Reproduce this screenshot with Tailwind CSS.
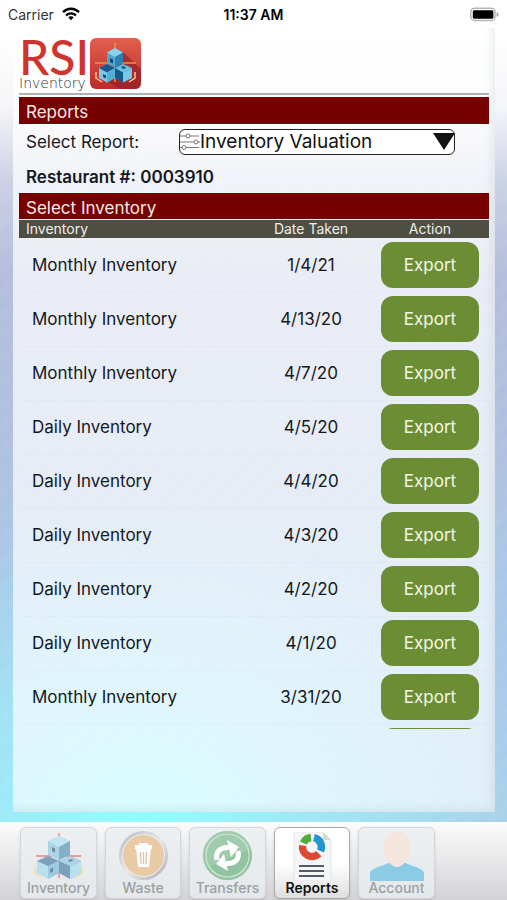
<!DOCTYPE html>
<html lang="en">

<head>
  <meta charset="UTF-8" />
  <meta name="viewport" content="width=device-width, initial-scale=1" />
  <title>RSI Inventory - Reports</title>
  <script src="https://cdn.jsdelivr.net/npm/@tailwindcss/browser@4"></script>
</head>

<body class="flex min-h-screen flex-col bg-[repeating-linear-gradient(135deg,#ffffff0c_0px,#ffffff00_8px,#ffffff0c_16px),radial-gradient(ellipse_75%_36%_at_28%_93%,#8dffff_0%,#9af4ff99_45%,#a8d4f000_100%),linear-gradient(180deg,#ffffff_0%,#ffffff_4%,#f4f5f8_12%,#cbd1e5_20%,#b4bddb_30%,#afc0df_48%,#a9c8e8_68%,#a8d0ea_92%)] font-['Inter',sans-serif] text-[#14181f]">

  <!-- Status bar -->
  <header class="grid h-7 grid-cols-3 items-center bg-white px-2 text-[14px] text-black">
    <div class="flex items-center gap-2 text-[#333]">
      <span>Carrier</span>
      <svg width="18" height="14" viewBox="0 0 18 14" fill="none" stroke="#000" stroke-width="2.4">
        <path d="M1 5.2C5.5 .6 12.500 .6 17 5.200" />
        <path d="M4 8.500C6.800 5.700 11.200 5.700 14 8.500" />
        <path d="M6.300 10.300C7.800 8.900 10.200 8.900 11.700 10.300L9 13.200Z" fill="#000" stroke="none" />
      </svg>
    </div>
    <span class="text-center font-semibold">11:37 AM</span>
    <svg class="justify-self-end" width="29" height="15" viewBox="0 0 31 15">
      <rect x=".8" y=".8" width="26" height="13" rx="4" fill="#fff" stroke="#b5b5b5" stroke-width="1.600" />
      <rect x="3" y="3" width="22" height="9" rx="1.500" fill="#000" />
      <path d="M28.500 5c1.500.5 2 1.500 2 2.500s-.5 2-2 2.500z" fill="#999" />
    </svg>
  </header>

  <!-- Page card -->
  <main class="mb-[10px] ml-[13px] mr-3 flex grow flex-col bg-linear-to-b from-white/75 to-white/65 px-[6px] pt-[10px] shadow-[inset_-8px_-8px_8px_-4px_rgba(160,180,190,0.22)]">
    <div class="flex h-[57px] items-start gap-1 border-b-2 border-[#adb0b5]">
      <div class="flex w-[67px] flex-col">
        <span class="h-[37px] font-['Lato',sans-serif] text-[48px] font-medium leading-[38px] text-[#d0342c]">RSI</span>
        <span class="font-['DejaVu_Sans',sans-serif] text-[14px] font-extralight leading-4 text-[#333]">Inventory</span>
      </div>
      <svg width="51" height="51" viewBox="0 0 51 51">
        <defs>
          <linearGradient id="logoRed" x1="0" y1="0" x2="0" y2="1">
            <stop offset="0" stop-color="#e2604e" />
            <stop offset="1" stop-color="#bd2a2a" />
          </linearGradient>
        </defs>
        <rect width="51" height="51" rx="6" fill="url(#logoRed)" />
        <path d="M32 13 51 31V45q0 6-6 6H30L18 44Z" fill="#8f2026" opacity=".65" />
        <path d="M25 5V44M5 25H46" stroke="#e9953f" stroke-width="1.500" />
        <path d="M6 34V40L12 44M45 34V40L39 44" fill="none" stroke="#f3c398" stroke-width="1.500" />
        <g>
          <path d="M25 10 33 14.500V25L25 29.500 17 25V14.500Z" fill="#4fa9cf" />
          <path d="M25 10 33 14.500 25 19 17 14.500Z" fill="#8cd3ea" />
          <path d="M25 19 33 14.500V25L25 29.500Z" fill="#2c7fae" />
          <path d="M17 26 25 30V40L17 44.500 9 40V30Z" fill="#79c8e4" />
          <path d="M17 26 25 30 17 34.500 9 30Z" fill="#15598c" />
          <path d="M17 34.500 25 30V40L17 44.500Z" fill="#53aed4" />
          <path d="M33 26 42 30V40L33 44.500 25 40V30Z" fill="#15598c" />
          <path d="M33 26 42 30 33 34.500 25 30Z" fill="#6bc0e0" />
          <path d="M33 34.500 42 30V40L33 44.500Z" fill="#79c8e4" />
          <path d="M20 20l3 1.500v4l-3-1.500zM13 36l3 1.500v3l-3-1.500zM31 29l3-1 2 2-3 1z" fill="#124a78" />
        </g>
      </svg>
    </div>

    <h1 class="mt-[2px] h-[27px] bg-[#770000] px-[7px] text-[17px] leading-[30px] text-[#f6e9e9]">Reports</h1>

    <div class="mt-[5px] flex h-[26px] items-center pl-[7px]">
      <label for="report" class="w-[153px] pt-[2px] text-[17px]">Select Report:</label>
      <div class="relative">
        <select id="report" class="h-[26px] w-[276px] appearance-none rounded-md border border-[#222] bg-white pl-5 text-[19px] leading-6 text-[#111]">
          <option>Inventory Valuation</option>
        </select>
        <svg class="pointer-events-none absolute left-px top-1" width="20" height="18" viewBox="0 0 20 18" fill="#fff" stroke="#777" stroke-width="1">
          <path d="M0 3H19M0 9H20M0 14.500H19" />
          <circle cx="8" cy="3" r="2" />
          <circle cx="16" cy="9" r="2" />
          <circle cx="4" cy="14.500" r="2" />
        </svg>
        <svg class="pointer-events-none absolute right-0 top-1" width="22" height="17" viewBox="0 0 22 17">
          <path d="M0 0H22L11 17Z" fill="#111" />
        </svg>
      </div>
    </div>

    <p class="mt-2 pl-[7px] text-[17px] font-semibold leading-7">Restaurant #: 0003910</p>

    <h2 class="mt-[2px] h-[26px] bg-[#770000] px-[7px] text-[17px] leading-[30px] text-[#f6e9e9]">Select Inventory</h2>

    <div class="mt-px max-h-[509px] overflow-hidden">
      <table class="w-full table-fixed">
        <thead>
          <tr class="h-[18px] bg-[#4f4e42] text-[14px] leading-[18px] text-[#eeeeea]">
            <th class="p-0 pl-[7px] text-left font-normal">Inventory</th>
            <th class="w-[120px] p-0 font-normal">Date Taken</th>
            <th class="w-[118px] p-0 font-normal">Action</th>
          </tr>
        </thead>
        <tbody id="inventoryRows" class="text-[17px]"></tbody>
      </table>
    </div>
  </main>

  <!-- Tab bar -->
  <nav class="flex h-[78px] gap-2 border-t border-white bg-linear-to-b from-[#fbfbfb] to-[#d3d2d5] pl-5 pt-1 text-[14px] font-medium text-[#9a9fa3]">
    <button class="flex h-[72px] w-[77px] flex-col items-center rounded-md border border-[#d3d7db] bg-[#e9edf0]/80 pt-1 shadow-sm">
      <svg width="54" height="49" viewBox="0 0 54 49">
        <path d="M27 1V46M4 24H49" stroke="#e89a9a" stroke-width="1.800" />
        <path d="M3 34V41L9 46M50 34V41L44 46" fill="none" stroke="#eee0a8" stroke-width="1.600" />
        <path d="M27 4 38 9V23L27 28 16 23V9Z" fill="#a9d5e6" />
        <path d="M27 4 38 9 27 15 16 9Z" fill="#c3e5ef" />
        <path d="M27 15 38 9V23L27 28Z" fill="#86afc6" />
        <path d="M16 24 27 29V41L16 47 5 41V29Z" fill="#b9e0ec" />
        <path d="M16 24 27 29 16 34 5 29Z" fill="#7d9fb9" />
        <path d="M16 34 27 29V41L16 47Z" fill="#9ccbdf" />
        <path d="M38 24 49 29V41L38 47 27 41V29Z" fill="#7d9fb9" />
        <path d="M38 24 49 29 38 34 27 29Z" fill="#a9d5e6" />
        <path d="M38 34 49 29V41L38 47Z" fill="#b9e0ec" />
        <path d="M20 15l3 1.500v4l-3-1.500zM18 37l3-1.500v4l-3 1.500zM36 28l4-1 1 2-4 1z" fill="#6d8da6" />
      </svg>
      <span class="leading-[13px]">Inventory</span>
    </button>
    <button class="flex h-[72px] w-[76px] flex-col items-center rounded-md border border-[#d3d7db] bg-[#e9edf0]/80 pt-[2px] shadow-sm">
      <svg width="51" height="51" viewBox="0 0 51 51">
        <defs>
          <linearGradient id="ring" x1="0" y1="0" x2="1" y2="1">
            <stop offset="0" stop-color="#b5b8bc" />
            <stop offset=".5" stop-color="#e6e8ea" />
            <stop offset="1" stop-color="#a9acb3" />
          </linearGradient>
        </defs>
        <circle cx="25.500" cy="25.500" r="24.500" fill="url(#ring)" />
        <circle cx="25.500" cy="25.500" r="21" fill="#e8cba4" stroke="#eef0f2" stroke-width="1" />
        <path d="M17 15H34V19H17ZM21 13H30V15H21ZM18 18H33L31 37H20Z" fill="#fff" />
        <path d="M22.500 22 23 34M25.500 22V34M28.500 22 28 34" stroke="#dcc5a5" stroke-width="1.300" />
      </svg>
      <span class="leading-[13px]">Waste</span>
    </button>
    <button class="flex h-[72px] w-[77px] flex-col items-center rounded-md border border-[#d3d7db] bg-[#e9edf0]/80 pt-[2px] shadow-sm">
      <svg width="51" height="51" viewBox="0 0 51 51">
        <circle cx="25.500" cy="25.500" r="24.500" fill="#8fc3a1" />
        <path d="M4 38A24.500 24.500 0 0 1 30 1.500 24.500 24.500 0 0 1 49 19Z" fill="#a8d2b5" opacity=".6" />
        <circle cx="25.500" cy="25.500" r="21.500" fill="none" stroke="#d5e6cf" stroke-width="1.200" />
        <!-- two arrows chasing each other -->
        <g fill="none" stroke="#fff" stroke-width="5">
          <path d="M15 30C13 22 18 17 27 17.500" />
          <path d="M36 21C38 29 33 34 24 33.500" />
        </g>
        <path d="M25 10 37 17 29 27ZM26 41 14 34 22 24Z" fill="#fff" />
      </svg>
      <span class="leading-[13px]">Transfers</span>
    </button>
    <button class="flex h-[72px] w-[76px] flex-col items-center rounded-md border border-[#aaaaaa] bg-linear-to-b from-white via-white to-[#dedede] pt-1 font-semibold text-[#111] shadow-sm" aria-current="page">
      <svg width="40" height="49" viewBox="0 0 40 49">
        <path d="M2 0H31L39 8V49H2Z" fill="#f5f6f7" stroke="#e3e5e7" stroke-width="1" />
        <path d="M31 0 39 8H31Z" fill="#cfe0d3" />
        <g fill="none" stroke-width="7.500" transform="translate(20 15)">
          <path d="M-8.600-4A9.500 9.500 0 0 1-1-9.500" stroke="#52ac3d" />
          <path d="M2-9.300A9.500 9.500 0 0 1 8.500 4" stroke="#2196d3" />
          <path d="M6.800 6.600A9.500 9.500 0 0 1-9.400-1.500" stroke="#dd4a33" />
        </g>
        <path d="M7 34H32M7 39H32M7 44H32" stroke="#555b68" stroke-width="2" />
      </svg>
      <span class="leading-[13px]">Reports</span>
    </button>
    <button class="flex h-[72px] w-[77px] flex-col items-center rounded-md border border-[#d3d7db] bg-[#e9edf0]/80 pt-1 shadow-sm">
      <svg width="54" height="49" viewBox="0 0 54 49">
        <path d="M0 49V41C1 36 12 34 19 31H35C42 34 53 36 54 41V49Z" fill="#8bcbe6" />
        <path d="M27 0C37 0 41 8 40 17 39 27 33 35 27 35S15 27 14 17C13 8 17 0 27 0Z" fill="#f5e6dd" />
      </svg>
      <span class="leading-[13px]">Account</span>
    </button>
  </nav>

  <script>
    const inventories = [
      { name: 'Monthly Inventory', date: '1/4/21' },
      { name: 'Monthly Inventory', date: '4/13/20' },
      { name: 'Monthly Inventory', date: '4/7/20' },
      { name: 'Daily Inventory', date: '4/5/20' },
      { name: 'Daily Inventory', date: '4/4/20' },
      { name: 'Daily Inventory', date: '4/3/20' },
      { name: 'Daily Inventory', date: '4/2/20' },
      { name: 'Daily Inventory', date: '4/1/20' },
      { name: 'Monthly Inventory', date: '3/31/20' },
      { name: '', date: '' }
    ];

    document.getElementById('inventoryRows').innerHTML = inventories.map(item => `
      <tr class="h-[54px] border-b border-slate-400/5">
        <td class="p-0 pl-[13px] pt-[2px]">${item.name}</td>
        <td class="p-0 pt-[2px] text-center">${item.date}</td>
        <td class="p-0 text-center">
          <button class="h-[46px] w-[98px] rounded-xl bg-[#6b8e35] pt-[2px] align-middle text-[#f4f8e8]">Export</button>
        </td>
      </tr>
    `).join('');
  </script>

</body>

</html>
